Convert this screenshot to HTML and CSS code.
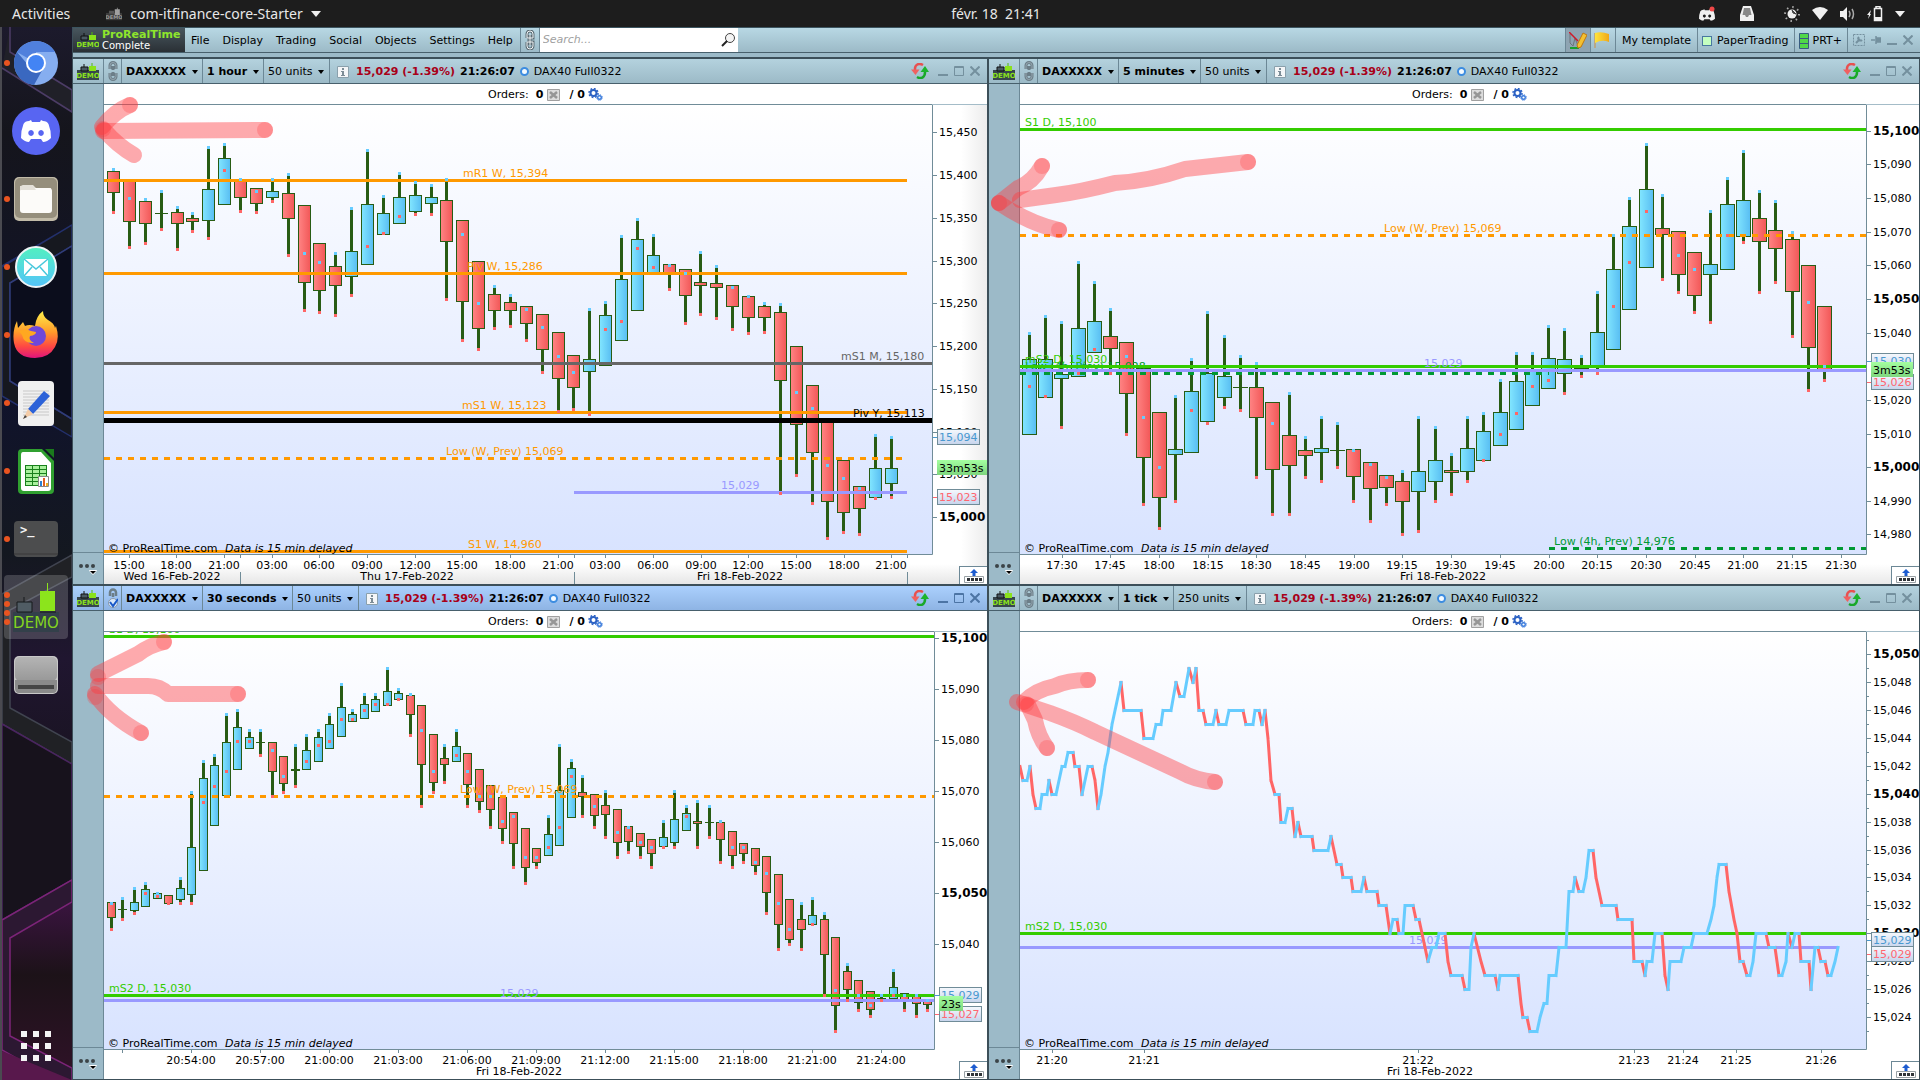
FILE: index.html
```html
<!DOCTYPE html>
<html lang="en">
<head>
<meta charset="utf-8">
<title>ProRealTime Complete</title>
<link rel="stylesheet" href="styles.css">
</head>
<body>
<svg class="defs" aria-hidden="true">
  <defs>
    <linearGradient id="gUp"><stop offset="0" stop-color="#82e6ff"/><stop offset="1" stop-color="#58bdf2"/></linearGradient>
    <linearGradient id="gDown"><stop offset="0" stop-color="#ff8484"/><stop offset="1" stop-color="#f25757"/></linearGradient>
    <linearGradient id="gPlot" x2="0" y2="1"><stop offset="0" stop-color="#ffffff"/><stop offset="1" stop-color="#d8e3ff"/></linearGradient>
    <linearGradient id="gTag" x2="0" y2="1"><stop offset="0" stop-color="#f6f9fd"/><stop offset="1" stop-color="#c6d4ec"/></linearGradient>
    <linearGradient id="gTime" x2="0" y2="1"><stop offset="0" stop-color="#a4ffa0"/><stop offset="1" stop-color="#7ed67e"/></linearGradient>
    <linearGradient id="gMail" x2="0" y2="1"><stop offset="0" stop-color="#52f0c0"/><stop offset="1" stop-color="#54c4fa"/></linearGradient>
    <linearGradient id="gFox" x2="0" y2="1"><stop offset="0" stop-color="#fff04a"/><stop offset=".45" stop-color="#ff9a2a"/><stop offset=".75" stop-color="#ff4a42"/><stop offset="1" stop-color="#e0147c"/></linearGradient>
    <linearGradient id="gDisk" x2="0" y2="1"><stop offset="0" stop-color="#b4b4b4"/><stop offset="1" stop-color="#989898"/></linearGradient>
    <linearGradient id="gFlag"><stop offset="0" stop-color="#ffe43a"/><stop offset="1" stop-color="#f0a818"/></linearGradient>
  </defs>
  <symbol id="demo" viewBox="0 0 22 17">
    <path d="M0 7h22v10H0z" fill="#37464c"/>
    <path d="M4 4h7v4H4z" fill="#4a5a62" stroke="#111"/><path d="M7 1v3" stroke="#111"/>
    <path d="M12 3h7v5h-7z" fill="#8ae21c"/><path d="M15 0v3" stroke="#55b810"/>
    <text x="11" y="15" text-anchor="middle" class="demo-word">DEMO</text>
  </symbol>
  <symbol id="chain" viewBox="0 0 10 20">
    <path d="M2 8V4.500a3 3 0 0 1 6 0V8M5 5v4M2 12v3.500a3 3 0 0 0 6 0V12M5 11v4" fill="none" stroke="#6c7e88" stroke-width="3"/>
    <path d="M2 8V4.500a3 3 0 0 1 6 0V8M2 12v3.500a3 3 0 0 0 6 0V12" fill="none" stroke="#94a6b0"/>
  </symbol>
  <symbol id="linked" viewBox="0 0 10 20">
    <path d="M2 8V4a3 3 0 0 1 6 0v4H2M2 12v4a3 3 0 0 0 6 0v-4H2M5 5v10" fill="none" stroke="#5c6c74" stroke-width="3"/>
    <path d="M2 8V4a3 3 0 0 1 6 0v4H2M2 12v4a3 3 0 0 0 6 0v-4H2M5 5v10" fill="none" stroke="#f0f4f6"/>
  </symbol>
  <symbol id="chainCheck" viewBox="0 0 10 20">
    <path d="M2 8V4.500a3 3 0 0 1 6 0V8M5 5v4" fill="none" stroke="#6c7e88" stroke-width="2.500"/>
    <circle cx="5" cy="15" r="4.500" fill="#d8e8fa" stroke="#8898a8"/>
    <path d="M2 14l3 4 5-7" fill="none" stroke="#1858c8" stroke-width="2"/>
  </symbol>
  <symbol id="info" viewBox="0 0 12 12">
    <path d="M.5.5h11v11H.5z" fill="#f4f6f8" stroke="#8aa0ac"/>
    <path d="M5 2h2v2H5zM4 5h3v4h1v1H4V9h1V6H4z" fill="#7c8c96"/>
  </symbol>
  <symbol id="refresh" viewBox="0 0 18 16">
    <path d="M12 2C8-.5 3.500 1.500 4 7" fill="none" stroke="#e85050" stroke-width="2.500"/><path d="M0 6.500h8.500L4.500 12z" fill="#f06060"/>
    <path d="M6 14c4 2.500 8.500.5 8-6" fill="none" stroke="#18a828" stroke-width="2.500"/><path d="M9.500 9H18l-4-6z" fill="#1cb42c"/>
  </symbol>
  <symbol id="min" viewBox="0 0 10 10"><path d="M0 9h10" stroke="currentColor" stroke-width="2"/></symbol>
  <symbol id="max" viewBox="0 0 10 10"><path d="M.5.5h9v9h-9zM0 1.500h10" fill="none" stroke="currentColor"/></symbol>
  <symbol id="close" viewBox="0 0 10 10"><path d="M.5.5l9 9m0-9l-9 9" stroke="currentColor" stroke-width="2"/></symbol>
  <symbol id="cancel" viewBox="0 0 13 12">
    <path d="M.5.5h12v11H.5z" fill="#dcdcdc" stroke="#a0a0a0"/><path d="M3 3l7 6m0-6L3 9" stroke="#969696" stroke-width="2.500"/>
  </symbol>
  <symbol id="gears" viewBox="0 0 15 13">
    <circle cx="5.500" cy="5" r="3" fill="none" stroke="#2c62c4" stroke-width="2"/>
    <circle cx="5.500" cy="5" r="4.500" fill="none" stroke="#2c62c4" stroke-width="1.500" stroke-dasharray="1.800 1.700"/>
    <circle cx="11.500" cy="9.500" r="1.800" fill="none" stroke="#3c7cdc" stroke-width="1.400"/>
    <circle cx="11.500" cy="9.500" r="2.800" fill="none" stroke="#3c7cdc" stroke-dasharray="1.200 1"/>
  </symbol>
  <symbol id="more" viewBox="0 0 18 12">
    <circle cx="2" cy="3" r="2" fill="#3c4448"/><circle cx="8" cy="3" r="2" fill="#3c4448"/><circle cx="14" cy="3" r="2" fill="#3c4448"/>
    <path d="M10 7h8l-1 2-3 3-3-3z" fill="#fff"/><path d="M11 8h6l-3 3z" fill="#000"/>
  </symbol>
  <symbol id="export" viewBox="0 0 20 14">
    <path d="M10 0l4 4h-2.500v3h-3V4H6z" fill="#1c5cd0"/>
    <path d="M.5 7.500h19v6H.5z" fill="#fff" stroke="#98a0a4"/><path d="M3 9h3v3H3zM7 9h3v3H7zM11 9h3v3h-3zM15 9h3v3h-3z" fill="#303438"/>
  </symbol>
  <symbol id="discord" viewBox="0 0 30 22">
    <path d="M10 0L8 1Q4 1 2.500 4 0 10 0 18q4 4 8 4l2-3h10l2 3q4 0 8-4 0-8-2.500-14Q26 1 22 1l-2-1-1 2h-8zM10 10a2.800 3 0 1 0 .1 0zm10 0a2.800 3 0 1 0 .1 0z" fill="currentColor" fill-rule="evenodd"/>
  </symbol>
</svg>

<header class="topbar">
  <div class="top-left">
    <button class="top-btn">Activities</button>
    <button class="top-btn app-name">
      <svg width="16" height="16" viewBox="0 0 22 17"><path d="M0 7h22v10H0z" fill="#3c3c3c"/><path d="M4 4h7v4H4z" fill="#555"/><path d="M12 2h7v8h-7zM15 0h1v3h-1z" fill="#a0a0a0"/><text x="11" y="16" text-anchor="middle" class="demo-word gray">DEMO</text></svg>
      com-itfinance-core-Starter
      <svg width="10" height="6"><path d="M0 0h10L5 6z" fill="#eee"/></svg>
    </button>
  </div>
  <time class="clock">févr. 18&nbsp; 21:41</time>
  <div class="tray">
    <svg class="tray-discord" width="17" height="16" viewBox="0 0 17 16"><use href="#discord" y="3" width="16" height="12"/><circle cx="13" cy="3" r="2.500" fill="#f04848"/></svg>
    <svg class="tray-box" width="14" height="15"><path d="M3 0h8l3 9v6H0V9z" fill="#f0f0f0"/><path d="M4 2h6l1.500 7H9l-1 2H6L5 9H2.500z" fill="#888"/></svg>
    <svg width="16" height="16"><circle cx="8" cy="8" r="7" fill="none" stroke="#aaa" stroke-width="2" stroke-dasharray="1.500 4"/><circle cx="8" cy="8" r="4.500" fill="#f0f0f0"/><path d="M8 4a4 4 0 0 0 4 4l-4-4" fill="#555" stroke="#444"/></svg>
    <svg width="16" height="13"><path d="M0 3q8-6 16 0L8 13z" fill="#f0f0f0"/></svg>
    <svg width="15" height="14"><path d="M0 4h3l4-4v14l-4-4H0z" fill="#f0f0f0"/><path d="M9 4q2 3 0 6M12 2q3 5 0 10" fill="none" stroke="#aaa" stroke-width="1.500"/></svg>
    <svg width="16" height="16"><path d="M4 4L0 9h2l-1 4 3-5H3z" fill="#f0f0f0"/><path d="M7.500 2.500h7v12h-7zM9 .5h4v2H9z" fill="none" stroke="#f0f0f0" stroke-width="1.500"/><path d="M8 11h6v3H8z" fill="#f0f0f0"/></svg>
    <svg width="10" height="6"><path d="M0 0h10L5 6z" fill="#f0f0f0"/></svg>
  </div>
</header>

<div class="screen">
  <nav class="dock" aria-label="Dock">
    <svg class="wall" viewBox="0 0 72 1053" preserveAspectRatio="none" aria-hidden="true">
      <defs>
        <linearGradient id="gWall" x2="0" y2="1"><stop offset="0" stop-color="#1c1a2c"/><stop offset=".1" stop-color="#15151c"/><stop offset=".35" stop-color="#10132c"/><stop offset=".5" stop-color="#141820"/><stop offset=".6" stop-color="#201630"/><stop offset=".75" stop-color="#16121a"/><stop offset=".83" stop-color="#3a1440"/><stop offset=".9" stop-color="#1c1218"/><stop offset="1" stop-color="#301228"/></linearGradient>
      </defs>
      <path d="M0 0h72v1053H0z" fill="url(#gWall)"/>
      <g stroke-width="1.500">
        <path d="M10 0v25l62 38v22L2 41" fill="#202028" stroke="#4c3c66"/>
        <path d="M72 198L2 240M72 219L10 256v98l62 38v18L2 369v-130l70-41z" fill="#16181f" stroke="#23306c"/>
        <path d="M72 219L10 256v98l62 38z" fill="#0b0d1c" stroke="#303c78"/>
        <path d="M72 528L2 567v130l70 40v-22L10 681v-98l62-33z" fill="#202125" stroke="#404450"/>
        <path d="M2 697l70 40v116L2 893z" fill="#17121c" stroke="#4a2460"/>
        <path d="M72 853L2 893v130l70 40v-22L10 1009v-98l62-36z" fill="#2c1832" stroke="#7c2478"/>
        <path d="M2 1024l70 29H2z" fill="#58184c"/>
      </g>
      <path d="M0 0h2v1053H0z" fill="#4a4a50"/>
    </svg>
    <a class="dock-item run" href="#" aria-label="Chromium"><svg width="44" height="46" viewBox="0 0 44 44"><circle cx="22" cy="22" r="22" fill="#86aef0"/><path d="M22 22L3 11A22 22 0 0 1 41 11H22z" fill="#5080dc"/><path d="M3 11a22 22 0 0 0 17 33l10-18-15-1z" fill="#3a68c0"/><circle cx="22" cy="22" r="10" fill="#fff"/><circle cx="22" cy="22" r="8" fill="#4384f4"/></svg></a>
    <a class="dock-item" href="#" aria-label="Discord"><svg width="48" height="48"><circle cx="24" cy="24" r="24" fill="#5865f2"/><use href="#discord" x="9" y="13" width="30" height="22" color="#fff"/></svg></a>
    <a class="dock-item run" href="#" aria-label="Files"><svg width="44" height="44"><rect width="44" height="44" rx="5" fill="#c2bba8"/><rect x="1" y="1" width="42" height="40" rx="5" fill="#958e7c"/><path d="M7 10q0-2 2-2h10l3 3h15v8H7z" fill="#e4e0d8"/><rect x="6" y="11" width="32" height="25" rx="3" fill="#fcfbf9"/><path d="M6 9h13l3 4H6z" fill="#e4e0d8"/></svg></a>
    <a class="dock-item run" href="#" aria-label="Mail"><svg width="42" height="42"><circle cx="21" cy="21" r="20" fill="url(#gMail)" stroke="#eef4f6" stroke-width="2"/><path d="M9 13h24v17H9z" fill="#fff"/><path d="M9 13l12 10 12-10M9 30l8-9m8 0l8 9" fill="none" stroke="#48c8dc" stroke-width="1.500"/></svg></a>
    <a class="dock-item run" href="#" aria-label="Firefox"><svg width="46" height="48" viewBox="0 0 46 48"><path d="M4 10l1 7 5-6 2 4q4-2 10 0 1-10 8-15 0 6 5 9 6 3 7 8l1-2q4 13-1 21-6 11-20 11Q4 47 1 32-1 20 4 10z" fill="url(#gFox)"/><circle cx="23" cy="25" r="10" fill="#7048d8"/><path d="M6 20q7-3 12 0l5 1q0 3-6 4-2 4 4 7-10 1-12-8z" fill="#ffa820"/></svg></a>
    <a class="dock-item run" href="#" aria-label="Text editor"><svg width="36" height="45"><rect width="36" height="45" rx="4" fill="#f0f0f0"/><path d="M5 10h26M5 13h26M5 16h26M5 19h26M5 22h26M5 25h26M5 28h26M5 31h26M5 34h26" stroke="#c8c8c8"/><path d="M26 10l6 5-17 18-5-5z" fill="#2c62d8"/><path d="M10 28l5 5-10 5z" fill="#f4cca8"/><path d="M7 34l2 2-4 2z" fill="#444"/></svg></a>
    <a class="dock-item run" href="#" aria-label="Calc"><svg width="36" height="45"><path d="M4 0h20l12 12v29q0 4-4 4H4q-4 0-4-4V4q0-4 4-4z" fill="#30a030"/><path d="M5 3h18l10 11v25q0 3-3 3H6q-3 0-3-3V6q0-3 2-3z" fill="#fff"/><path d="M27 0h9v9z" fill="#1a7a1c"/><path d="M7 16h22v21H7z" fill="#18801c"/><path d="M8 17h6v3H8zm7 0h6v3h-6zm7 0h6v3h-6zM8 21h6v3H8zm7 0h6v3h-6zm7 0h6v3h-6zM8 25h6v3H8zm7 0h6v3h-6zm7 0h6v3h-6zM8 29h6v3H8zm7 0h6v3h-6zM8 33h6v3H8zm7 0h6v3h-6z" fill="#a8f09c"/><path d="M20.500 27.500h10v10h-10z" fill="#fff" stroke="#888"/><path d="M22 32h2v5h-2z" fill="#2c80d0"/><path d="M25 29h2v8h-2z" fill="#e06020"/><path d="M28 34h2v3h-2z" fill="#f0b020"/></svg></a>
    <a class="dock-item run" href="#" aria-label="Terminal"><svg width="44" height="36"><rect width="44" height="36" rx="4" fill="#4c4d4e"/><path d="M0 33h44" stroke="#383838"/><text x="6" y="13" class="term">&gt;_</text></svg></a>
    <a class="dock-item run run-many" href="#" aria-label="ProRealTime"><svg width="46" height="50"><path d="M0 30h46v20H0z" fill="#33404a"/><path d="M4 20h15v10H4z" fill="#505c64" stroke="#14181a"/><path d="M11 15v5M27 30h16" stroke="#14181a"/><path d="M27 9h15v20H27zM34 1h1v8h-1z" fill="#8ce41c"/><text x="23" y="46" text-anchor="middle" class="demo-big">DEMO</text></svg></a>
    <a class="dock-item" href="#" aria-label="Disk"><svg width="44" height="38"><rect width="44" height="38" rx="5" fill="#c8c8c8"/><rect x="1" y="1" width="42" height="24" rx="5" fill="url(#gDisk)"/><path d="M1 24h42v8q0 5-4 5H5q-4 0-4-5z" fill="#8a8a8a"/><path d="M4 29h36v4H4z" fill="#454545"/></svg></a>
    <a class="dock-item apps" href="#" aria-label="Show applications"><svg width="30" height="30"><path d="M0 0h6v6H0zM12 0h6v6h-6zM24 0h6v6h-6zM0 12h6v6H0zM12 12h6v6h-6zM24 12h6v6h-6zM0 24h6v6H0zM12 24h6v6h-6zM24 24h6v6h-6z" fill="#f4f4f4"/></svg></a>
  </nav>

  <main class="app">
    <div class="menubar">
      <div class="brand">
        <svg width="22" height="17"><use href="#demo"/></svg>
        <div class="brand-text"><strong>ProRealTime</strong><span>Complete</span></div>
      </div>
      <div class="menus">
        <button>File</button><button>Display</button><button>Trading</button><button>Social</button><button>Objects</button><button>Settings</button><button>Help</button>
      </div>
      <button class="link-all" aria-label="Link windows"><svg width="10" height="20"><use href="#linked"/></svg></button>
      <label class="search"><input type="text" placeholder="Search..." aria-label="Search"><svg width="14" height="14"><circle cx="9" cy="5" r="4.500" fill="#f4f4f4" stroke="#444"/><path d="M6 8l-5 5" stroke="#222" stroke-width="2"/></svg></label>
      <div class="menu-right">
        <button class="cell tool on" aria-label="Drawing tools"><svg width="18" height="17"><path d="M1 16h9" stroke="#18a030" stroke-width="2"/><path d="M1 2v9l3 3 2-8 3 8" fill="none" stroke="#6c747c"/><path d="M0 0l9 9" stroke="#d01828" stroke-width="1.500"/><path d="M14 1l4 2-6 12-3 1-1-3z" fill="#f4c030" stroke="#c07810"/></svg></button>
        <button class="cell tool" aria-label="Alerts"><svg width="16" height="16"><path d="M1 1v15" stroke="#b8a888" stroke-width="2"/><path d="M1 1q6-2 14 1v8q-7-3-14 1z" fill="url(#gFlag)"/></svg></button>
        <button class="cell">My template</button>
        <button class="cell mode"><i class="sq"></i>PaperTrading</button>
        <button class="cell plus"><svg width="10" height="16"><path d="M.5.5h9v15h-9z" fill="#50d848" stroke="#385c80"/><path d="M0 5.500h10M0 10.500h10" stroke="#385c80"/></svg>PRT+</button>
        <div class="cell wins">
          <button aria-label="Configure"><svg width="12" height="12"><path d="M.5.5h11v11H.5z" fill="none" stroke="currentColor" stroke-dasharray="2 1"/><path d="M3 9l4-4M6 3a2 2 0 0 0 3 3" fill="none" stroke="currentColor" stroke-width="2"/></svg></button>
          <button aria-label="Pin"><svg width="10" height="8"><path d="M0 4h4M5 0v8M6 2h4v4H6z" fill="currentColor" stroke="currentColor" stroke-width="1.500"/></svg></button>
          <button aria-label="Minimize"><svg width="10" height="10"><use href="#min"/></svg></button>
          <button aria-label="Close"><svg width="10" height="10"><use href="#close"/></svg></button>
        </div>
      </div>
    </div>

    <div class="desk">
      <section class="panel">
        <div class="title">
          <span class="logo"><svg width="22" height="17"><use href="#demo"/></svg></span>
          <button class="lnk" aria-label="Link"><svg width="10" height="20"><use href="#chain"/></svg></button>
          <span class="pick bold"><select aria-label="Instrument"><option>DAXXXXX</option></select></span>
          <span class="pick bold"><select aria-label="Timeframe"><option>1 hour</option></select></span>
          <span class="pick"><select aria-label="Units"><option>50 units</option></select></span>
          <div class="quote"><svg width="12" height="12"><use href="#info"/></svg><b class="price">15,029 (-1.39%)</b><b>21:26:07</b><i class="ring"></i><span>DAX40 Full0322</span></div>
          <div class="wins"><button aria-label="Refresh"><svg width="18" height="16"><use href="#refresh"/></svg></button><button aria-label="Minimize"><svg width="10" height="10"><use href="#min"/></svg></button><button aria-label="Maximize"><svg width="10" height="10"><use href="#max"/></svg></button><button aria-label="Close"><svg width="10" height="10"><use href="#close"/></svg></button></div>
        </div>
        <div class="work">
          <aside class="side"><button aria-label="More tools"><svg width="18" height="12"><use href="#more"/></svg></button></aside>
          <div class="view">
            <div class="orders">Orders:<b>0</b><svg width="13" height="12"><use href="#cancel"/></svg><b class="slash">/ 0</b><svg width="15" height="13"><use href="#gears"/></svg></div>
            <div class="chart shade"><svg id="hour"></svg><button class="out" aria-label="Detach"><svg width="20" height="14"><use href="#export"/></svg></button></div>
          </div>
        </div>
      </section>

      <section class="panel">
        <div class="title">
          <span class="logo"><svg width="22" height="17"><use href="#demo"/></svg></span>
          <button class="lnk" aria-label="Link"><svg width="10" height="20"><use href="#chain"/></svg></button>
          <span class="pick bold"><select aria-label="Instrument"><option>DAXXXXX</option></select></span>
          <span class="pick bold"><select aria-label="Timeframe"><option>5 minutes</option></select></span>
          <span class="pick"><select aria-label="Units"><option>50 units</option></select></span>
          <div class="quote"><svg width="12" height="12"><use href="#info"/></svg><b class="price">15,029 (-1.39%)</b><b>21:26:07</b><i class="ring"></i><span>DAX40 Full0322</span></div>
          <div class="wins"><button aria-label="Refresh"><svg width="18" height="16"><use href="#refresh"/></svg></button><button aria-label="Minimize"><svg width="10" height="10"><use href="#min"/></svg></button><button aria-label="Maximize"><svg width="10" height="10"><use href="#max"/></svg></button><button aria-label="Close"><svg width="10" height="10"><use href="#close"/></svg></button></div>
        </div>
        <div class="work">
          <aside class="side"><button aria-label="More tools"><svg width="18" height="12"><use href="#more"/></svg></button></aside>
          <div class="view">
            <div class="orders">Orders:<b>0</b><svg width="13" height="12"><use href="#cancel"/></svg><b class="slash">/ 0</b><svg width="15" height="13"><use href="#gears"/></svg></div>
            <div class="chart shade low"><svg id="five"></svg><button class="out" aria-label="Detach"><svg width="20" height="14"><use href="#export"/></svg></button></div>
          </div>
        </div>
      </section>

      <section class="panel active">
        <div class="title">
          <span class="logo"><svg width="22" height="17"><use href="#demo"/></svg></span>
          <button class="lnk" aria-label="Link"><svg width="10" height="20"><use href="#chainCheck"/></svg></button>
          <span class="pick bold"><select aria-label="Instrument"><option>DAXXXXX</option></select></span>
          <span class="pick bold"><select aria-label="Timeframe"><option>30 seconds</option></select></span>
          <span class="pick"><select aria-label="Units"><option>50 units</option></select></span>
          <div class="quote"><svg width="12" height="12"><use href="#info"/></svg><b class="price">15,029 (-1.39%)</b><b>21:26:07</b><i class="ring"></i><span>DAX40 Full0322</span></div>
          <div class="wins"><button aria-label="Refresh"><svg width="18" height="16"><use href="#refresh"/></svg></button><button aria-label="Minimize"><svg width="10" height="10"><use href="#min"/></svg></button><button aria-label="Maximize"><svg width="10" height="10"><use href="#max"/></svg></button><button aria-label="Close"><svg width="10" height="10"><use href="#close"/></svg></button></div>
        </div>
        <div class="work">
          <aside class="side"><button aria-label="More tools"><svg width="18" height="12"><use href="#more"/></svg></button></aside>
          <div class="view">
            <div class="orders">Orders:<b>0</b><svg width="13" height="12"><use href="#cancel"/></svg><b class="slash">/ 0</b><svg width="15" height="13"><use href="#gears"/></svg></div>
            <div class="chart"><svg id="half"></svg><button class="out" aria-label="Detach"><svg width="20" height="14"><use href="#export"/></svg></button></div>
          </div>
        </div>
      </section>

      <section class="panel">
        <div class="title">
          <span class="logo"><svg width="22" height="17"><use href="#demo"/></svg></span>
          <button class="lnk" aria-label="Link"><svg width="10" height="20"><use href="#chain"/></svg></button>
          <span class="pick bold"><select aria-label="Instrument"><option>DAXXXXX</option></select></span>
          <span class="pick bold"><select aria-label="Timeframe"><option>1 tick</option></select></span>
          <span class="pick"><select aria-label="Units"><option>250 units</option></select></span>
          <div class="quote"><svg width="12" height="12"><use href="#info"/></svg><b class="price">15,029 (-1.39%)</b><b>21:26:07</b><i class="ring"></i><span>DAX40 Full0322</span></div>
          <div class="wins"><button aria-label="Refresh"><svg width="18" height="16"><use href="#refresh"/></svg></button><button aria-label="Minimize"><svg width="10" height="10"><use href="#min"/></svg></button><button aria-label="Maximize"><svg width="10" height="10"><use href="#max"/></svg></button><button aria-label="Close"><svg width="10" height="10"><use href="#close"/></svg></button></div>
        </div>
        <div class="work">
          <aside class="side"><button aria-label="More tools"><svg width="18" height="12"><use href="#more"/></svg></button></aside>
          <div class="view">
            <div class="orders">Orders:<b>0</b><svg width="13" height="12"><use href="#cancel"/></svg><b class="slash">/ 0</b><svg width="15" height="13"><use href="#gears"/></svg></div>
            <div class="chart"><svg id="tick"></svg><button class="out" aria-label="Detach"><svg width="20" height="14"><use href="#export"/></svg></button></div>
          </div>
        </div>
      </section>
    </div>
  </main>
</div>

<svg class="marks" viewBox="0 0 1920 1080" preserveAspectRatio="none" aria-hidden="true">
  <path d="M265 130L103 131"/><path d="M130 105Q115 111 102 127"/><path d="M134 155Q118 146 104 130"/>
  <path d="M1248 162L1185 169Q1150 181 1115 183 1080 192 1056 195L1020 200"/><path d="M1042 166Q1033 182 1018 188L999 203"/><path d="M1059 230Q1030 224 999 203"/>
  <path d="M238 694H168Q160 686 148 686H98"/><path d="M164 642Q150 645 138 654L98 674"/><path d="M95 694Q110 716 141 733"/>
  <path d="M1215 782Q1195 780 1181 772L1095 732Q1075 722 1050 713L1017 702"/><path d="M1088 680Q1068 680 1055 686 1035 690 1024 702"/><path d="M1047 748Q1038 736 1035 720L1028 705"/>
  <g class="ends"><circle cx="265" cy="130" r="8"/><circle cx="130" cy="105" r="8"/><circle cx="103" cy="129" r="8"/><circle cx="1248" cy="162" r="8"/><circle cx="1042" cy="166" r="8"/><circle cx="1059" cy="230" r="8"/><circle cx="999" cy="203" r="8"/><circle cx="238" cy="694" r="8"/><circle cx="164" cy="642" r="8"/><circle cx="141" cy="733" r="8"/><circle cx="98" cy="677" r="8"/><circle cx="95" cy="697" r="8"/><circle cx="1215" cy="782" r="8"/><circle cx="1088" cy="680" r="8"/><circle cx="1047" cy="748" r="8"/><circle cx="1026" cy="704" r="8"/></g>
</svg>
<script src="charts.js"></script>
</body>
</html>
```
FILE: styles.css
```css
* { box-sizing: border-box; }
html, body { height: 100%; }
body {
  margin: 0;
  display: flex;
  flex-direction: column;
  background: #9cbac8;
  color: #000;
  font: 11px/14px "DejaVu Sans", sans-serif;
  overflow: hidden;
}
button, select, input { font: inherit; color: inherit; border: 0; background: none; padding: 0; margin: 0; border-radius: 0; }
svg { display: block; flex: none; }
.defs { position: absolute; width: 0; height: 0; }

/* desktop bar */
.topbar {
  flex: none;
  height: 27px;
  display: grid;
  grid-template-columns: 950fr auto 878fr;
  align-items: center;
  background: #1d1d1d;
  color: #e8e8e8;
  font: 14px/20px "Noto Sans", sans-serif;
}
.top-left { display: flex; gap: 36px; padding-left: 12px; }
.app-name { display: flex; align-items: center; gap: 8px; }
.clock { white-space: nowrap; }
.tray { display: flex; align-items: center; justify-content: flex-end; gap: 12px; padding-right: 15px; color: #f0f0f0; }
.tray-discord { margin-right: 12px; }
.tray-box { margin-right: 18px; }
.demo-word { font: bold 7px "DejaVu Sans", sans-serif; fill: #8ae21c; }
.demo-word.gray { fill: #999; }
.demo-big { font: 15px "DejaVu Sans", sans-serif; fill: #84d420; }
.term { font: bold 12px "DejaVu Sans Mono", monospace; fill: #f4f4f4; }

.screen { flex: 1; min-height: 0; display: flex; }

/* dock */
.dock {
  position: relative;
  flex: none;
  width: 72px;
  display: flex;
  flex-direction: column;
  gap: 4px;
  padding: 4px 4px 2px;
}
.wall { position: absolute; inset: 0; width: 100%; height: 100%; }
.dock-item { position: relative; flex: none; height: 64px; display: flex; align-items: center; justify-content: center; border-radius: 4px; }
.apps { margin-top: auto; }
.run::before {
  content: "";
  position: absolute;
  left: 0;
  top: 29px;
  width: 6px;
  height: 6px;
  border-radius: 3px;
  background: #e95420;
}
.run-many { background: rgba(255, 255, 255, .18); }
.run-many::before { top: 17px; box-shadow: 0 9px #e95420, 0 18px #e95420, 0 27px #e95420; }

/* application */
.app { flex: 1; min-width: 0; display: flex; flex-direction: column; border-left: 1px solid #3c4f59; border-top: 1px solid #3c5560; }
.menubar {
  flex: none;
  height: 25px;
  display: flex;
  border-bottom: 1px solid #48606c;
  background: linear-gradient(#b8d8e4, #9cbac7);
}
.brand { flex: none; width: 112px; display: flex; align-items: center; gap: 3px; padding-left: 4px; background: linear-gradient(#48565e, #2a3035); }
.brand-text { display: flex; flex-direction: column; color: #fff; font-size: 10px; line-height: 11px; }
.brand-text strong { font-size: 11px; color: #8ee62c; }
.menus { display: flex; gap: 1px; padding-right: 1px; }
.menus button { padding: 1px 6px 0; }
.link-all { width: 20px; padding: 0 4px; border: solid #6c8896; border-width: 0 1px; }
.search { display: flex; align-items: center; width: 198px; padding: 0 3px; background: #fff; }
.search input { flex: 1; min-width: 0; outline: 0; }
.search input::placeholder { color: #a0a0a0; font-style: italic; }
.menu-right { margin-left: auto; display: flex; padding-right: 1px; }
.cell { display: flex; align-items: center; padding: 1px 6px 0; border-left: 1px solid #6c8896; white-space: nowrap; }
.tool { width: 25px; padding: 0 3px; }
.on { background: #8ea4b2; }
.mode { gap: 5px; padding: 1px 5px 0 4px; }
.plus { gap: 4px; padding: 1px 5px 0 4px; }
.sq { width: 10px; height: 10px; background: #c4ffc0; border: 1px solid #4878a0; }
.wins { display: flex; align-items: center; gap: 6px; color: #74909e; }
.menubar .wins { padding: 0 6px 0 5px; }

.desk {
  flex: 1;
  min-height: 0;
  margin-top: 4px;
  display: grid;
  grid-template-columns: minmax(0, 914fr) minmax(0, 930fr);
  grid-template-rows: minmax(0, 525fr) minmax(0, 493fr);
  gap: 2px;
  padding: 2px 1px 1px 0;
  background: #3c4f59;
}
.panel { display: flex; flex-direction: column; background: #9cbac8; }
.title {
  flex: none;
  height: 25px;
  display: flex;
  border-bottom: 1px solid #48606c;
  background: linear-gradient(#b4d2de, #9cbac7);
}
.active .title { background: linear-gradient(#abd0fd, #8eb4e4); }
.logo { flex: none; width: 31px; display: flex; align-items: center; justify-content: center; border-right: 1px solid #6c8896; }
.lnk { flex: none; width: 18px; padding: 0 4px; border-right: 1px solid #6c8896; }
.pick { flex: none; display: flex; align-items: center; padding: 1px 5px 0 4px; border-right: 1px solid #6c8896; gap: 5px; }
.pick select { appearance: none; outline: 0; }
.pick::after { content: ""; border: solid transparent; border-width: 4px 3px 0; border-top-color: #000; }
.bold { padding-right: 4px; }
.bold select { font-weight: bold; }
.quote { display: flex; align-items: center; padding: 1px 0 0 7px; white-space: nowrap; }
.quote b { margin-right: 5px; }
.quote .price { margin-left: 7px; color: #a80018; }
.ring { width: 9px; height: 9px; border: 2px solid #3c8ce0; border-radius: 5px; background: #f4faff; margin-right: 5px; }
.title .wins { margin-left: auto; padding-right: 7px; }
.title .wins button:first-child { margin-right: 3px; }
.active .wins { color: #4c74a4; }

.work { flex: 1; min-height: 0; display: flex; }
.side { flex: none; width: 31px; display: flex; flex-direction: column; border-right: 1px solid #6c8896; background: #9cbac8; }
.side button { margin-top: auto; height: 32px; padding: 0 6px; border-top: 1px solid #6c8896; }
.view { flex: 1; min-width: 0; display: flex; flex-direction: column; background: #fff; }
.orders { flex: none; height: 20px; display: flex; align-items: center; justify-content: center; padding-top: 1px; }
.orders b { margin: 0 4px 0 7px; }
.orders .slash { margin: 0 3px 0 9px; white-space: pre; }
.chart { position: relative; flex: 1; min-height: 0; }
.shade { background: linear-gradient(90deg, transparent calc(100% - 26px), #ececec), linear-gradient(#fff calc(100% - 20px), #e6e6e6); }
.low { background: linear-gradient(#fff calc(100% - 20px), #e9e9e9); }
.chart > svg { width: 100%; height: 100%; }
.chart text { fill: #000; }
.chart .major { font-weight: bold; font-size: 12px; }
.chart .slant { font-style: italic; }
.out { position: absolute; right: 0; bottom: 0; padding: 2px 3px 1px 4px; background: #fff; border: solid #6c8896; border-width: 1px 0 0 1px; }

/* freehand arrows over the windows */
.marks { position: absolute; inset: 0; width: 100%; height: 100%; pointer-events: none; }
.marks path { fill: none; stroke: rgba(255, 60, 65, .43); stroke-width: 16; stroke-linecap: round; stroke-linejoin: round; }
.ends { fill: rgba(255, 50, 55, .25); }
```
FILE: charts.js
```js
// Each chart is described on its own canvas: box = [left, top, width, height],
// right / bottom = edges of the plot. Everything is scaled to the real element.
const ORANGE = '#ff9900', GREEN = '#33cc00', VIOLET = '#9999ff', PINE = '#009933', FRAME = '#708c98';

// candles: high marker, body top, body bottom, low marker, direction
const charts = {
  hour: {
    box: [104, 104, 883, 480], right: 932, bottom: 554, body: 13, first: 113, last: 891,
    candles: [
      [169,171,192,212,'d'],[198,181,221,247,'d'],[199,201,223,243,'d'],[191,213,213,229,'d'],[207,212,223,249,'d'],
      [213,218,221,231,'d'],[147,189,220,238,'u'],[144,158,204,170,'u'],[179,181,197,211,'d'],[191,188,203,212,'d'],
      [179,191,197,201,'u'],[174,193,218,255,'d'],[253,205,282,310,'d'],[262,243,290,312,'d'],[253,266,285,315,'d'],
      [208,251,276,295,'u'],[150,204,264,246,'u'],[196,213,234,233,'u'],[173,197,223,216,'u'],[182,195,211,214,'u'],
      [185,197,203,214,'u'],[179,200,241,299,'d'],[234,220,301,340,'d'],[303,261,328,349,'d'],[286,294,310,328,'d'],
      [295,302,310,326,'d'],[309,306,323,340,'d'],[327,314,349,372,'d'],[356,332,378,411,'d'],[372,355,387,409,'d'],
      [309,359,371,414,'u'],[302,315,365,329,'u'],[236,279,340,321,'u'],[219,239,310,248,'u'],[235,255,272,267,'u'],
      [265,264,272,289,'d'],[273,269,295,323,'d'],[252,282,285,314,'d'],[266,283,287,318,'d'],[287,285,306,329,'d'],
      [296,296,317,333,'d'],[303,306,317,332,'d'],[304,312,380,493,'d'],[392,346,424,475,'d'],[408,385,452,503,'d'],
      [465,421,501,538,'d'],[478,460,512,532,'d'],[488,486,508,534,'d'],[435,468,497,498,'u'],[437,468,483,497,'u']
    ],
    lines: [
      [180,104,907,ORANGE,3,'mR1 W, 15,394',463], [273,104,907,ORANGE,3,'Piv W, 15,286',467],
      [363,104,932,'#666666',3,'mS1 M, 15,180',841], [412,104,907,ORANGE,3,'mS1 W, 15,123',462],
      [420,104,932,'#000000',5,'Piv Y, 15,113',853], [458,104,907,ORANGE,-3,'Low (W, Prev) 15,069',446],
      [492,574,907,VIOLET,3,'15,029',721], [551,104,907,ORANGE,3,'S1 W, 14,960',468]
    ],
    prices: [[132,'15,450'],[175,'15,400'],[218,'15,350'],[261,'15,300'],[303,'15,250'],[346,'15,200'],[389,'15,150'],[432,'15,100'],[474,'15,050'],[517,'15,000',1]],
    tags: [[437,'15,094','hi'],[497,'15,023','lo'],[468,'33m53s','time']],
    times: [[129,'15:00'],[176,'18:00'],[224,'21:00'],[240,''],[272,'03:00'],[319,'06:00'],[367,'09:00'],[415,'12:00'],[462,'15:00'],[510,'18:00'],[558,'21:00'],[574,''],[605,'03:00'],[653,'06:00'],[701,'09:00'],[748,'12:00'],[796,'15:00'],[844,'18:00'],[891,'21:00'],[907,'']],
    days: [[172,'Wed 16-Feb-2022'],[407,'Thu 17-Feb-2022'],[740,'Fri 18-Feb-2022']], splits: [240,574,907]
  },
  five: {
    box: [1020, 104, 899, 480], right: 1866, bottom: 554, body: 15, first: 1029, last: 1824,
    candles: [
      [333,359,434,386,'u'],[316,359,397,396,'u'],[322,374,378,427,'u'],[262,328,376,373,'u'],[282,321,352,349,'u'],
      [309,336,348,373,'d'],[356,342,393,434,'d'],[417,368,457,504,'d'],[467,412,497,528,'d'],[396,449,454,501,'u'],
      [359,391,452,410,'u'],[312,373,421,423,'u'],[336,376,397,407,'u'],[356,387,387,410,'u'],[363,387,417,477,'d'],
      [423,402,469,514,'d'],[393,435,465,514,'d'],[437,450,455,477,'d'],[417,448,452,481,'u'],[423,450,450,467,'u'],
      [450,449,476,501,'d'],[464,462,488,521,'d'],[477,475,487,504,'d'],[471,481,501,534,'d'],[417,471,491,531,'u'],
      [427,460,481,501,'u'],[454,470,472,494,'d'],[417,448,471,481,'u'],[413,431,460,460,'u'],[380,412,445,434,'u'],
      [353,381,429,413,'u'],[353,371,405,386,'u'],[326,358,388,380,'u'],[329,359,373,393,'u'],[356,368,368,376,'d'],
      [292,332,366,373,'u'],[235,269,349,306,'u'],[198,226,309,262,'u'],[144,189,267,211,'u'],[195,228,234,279,'d'],
      [255,231,274,292,'d'],[269,252,295,312,'d'],[211,264,274,322,'u'],[178,204,269,235,'u'],[151,200,236,242,'u'],
      [191,218,241,292,'d'],[201,230,248,282,'d'],[232,239,291,336,'d'],[302,265,347,390,'d'],[366,306,369,380,'d']
    ],
    lines: [
      [129,1020,1866,GREEN,3,'S1 D, 15,100',1025], [235,1020,1866,ORANGE,-3,'Low (W, Prev) 15,069',1384],
      [373,1020,1549,PINE,-3,'Low (4h, Prev) 15,028',1025], [366,1020,1866,GREEN,3,'mS2 D, 15,030',1025],
      [370,1020,1866,VIOLET,3,'15,029',1424], [548,1549,1866,PINE,-3,'Low (4h, Prev) 14,976',1554]
    ],
    prices: [[131,'15,100',1],[164,'15,090'],[198,'15,080'],[232,'15,070'],[265,'15,060'],[299,'15,050',1],[333,'15,040'],[400,'15,020'],[434,'15,010'],[467,'15,000',1],[501,'14,990'],[534,'14,980']],
    tags: [[361,'15,030','hi'],[382,'15,026','lo'],[370,'3m53s','time']],
    times: [[1062,'17:30'],[1110,'17:45'],[1159,'18:00'],[1208,'18:15'],[1256,'18:30'],[1305,'18:45'],[1354,'19:00'],[1402,'19:15'],[1451,'19:30'],[1500,'19:45'],[1549,'20:00'],[1597,'20:15'],[1646,'20:30'],[1695,'20:45'],[1743,'21:00'],[1792,'21:15'],[1841,'21:30']],
    days: [[1443,'Fri 18-Feb-2022']], splits: []
  },
  half: {
    box: [104, 631, 883, 448], right: 934, bottom: 1049, body: 9, first: 111, last: 927,
    candles: [
      [903,902,917,929,'d'],[898,909,909,919,'d'],[888,902,910,913,'u'],[883,889,906,893,'u'],[893,893,898,896,'u'],
      [903,895,903,903,'d'],[878,888,899,903,'u'],[792,847,894,903,'u'],[761,778,870,802,'u'],[755,765,825,786,'u'],
      [714,742,795,771,'u'],[710,727,769,741,'u'],[730,737,748,741,'u'],[730,742,742,755,'u'],[750,742,771,796,'d'],
      [776,756,783,792,'d'],[745,769,770,786,'u'],[735,750,769,761,'u'],[730,737,761,745,'u'],[714,724,748,741,'u'],
      [684,707,736,719,'u'],[710,714,721,719,'u'],[694,704,718,710,'u'],[694,699,711,704,'u'],[668,691,705,704,'u'],
      [689,693,699,699,'u'],[694,695,714,735,'d'],[730,705,764,806,'d'],[771,734,782,792,'d'],[745,758,764,782,'d'],
      [730,746,761,755,'u'],[771,753,784,806,'d'],[796,769,801,811,'d'],[796,785,809,827,'d'],[821,797,828,842,'d'],
      [816,812,843,867,'d'],[857,828,867,883,'d'],[857,848,862,867,'d'],[816,834,855,847,'u'],[745,790,845,827,'u'],
      [760,768,817,776,'u'],[776,792,796,816,'d'],[806,794,815,827,'d'],[791,805,814,837,'d'],[832,809,842,857,'d'],
      [827,826,841,852,'d'],[842,833,846,857,'d'],[847,839,853,867,'d'],[821,837,846,847,'u'],[791,819,842,847,'u'],
      [806,813,830,816,'u'],[801,821,823,847,'d'],[806,822,822,837,'u'],[821,822,839,862,'d'],[847,831,855,867,'d'],
      [847,843,853,862,'d'],[862,848,865,873,'d'],[873,856,892,913,'d'],[903,874,924,949,'d'],[929,899,939,944,'d'],
      [903,919,929,949,'d'],[898,915,924,924,'u'],[913,919,954,995,'d'],[990,937,1005,1031,'d'],[964,971,989,1000,'d'],
      [995,980,1002,1010,'d'],[1005,991,1009,1016,'d'],[995,998,998,1000,'u'],[970,987,998,995,'u'],[995,993,999,1010,'d'],
      [995,996,1003,1016,'d'],[1000,1001,1004,1010,'d']
    ],
    lines: [
      [636,104,934,GREEN,3,'S1 D, 15,100',109], [796,104,934,ORANGE,-3,'Low (W, Prev) 15,069',460],
      [995,104,934,GREEN,3,'mS2 D, 15,030',109], [1000,104,934,VIOLET,3,'15,029',500]
    ],
    prices: [[638,'15,100',1],[689,'15,090'],[740,'15,080'],[791,'15,070'],[842,'15,060'],[893,'15,050',1],[944,'15,040']],
    tags: [[995,'15,029','hi'],[1014,'15,027','lo'],[1004,'23s','time']],
    times: [[122,''],[191,'20:54:00'],[260,'20:57:00'],[329,'21:00:00'],[398,'21:03:00'],[467,'21:06:00'],[536,'21:09:00'],[605,'21:12:00'],[674,'21:15:00'],[743,'21:18:00'],[812,'21:21:00'],[881,'21:24:00']],
    days: [[519,'Fri 18-Feb-2022']], splits: []
  },
  tick: {
    box: [1020, 631, 899, 448], right: 1866, bottom: 1049,
    path: [
      [1020,766],[1023,780],[1027,780],[1030,766],[1033,794],[1036,808],[1040,808],[1042,794],[1047,794],[1049,780],
      [1052,794],[1056,794],[1062,766],[1065,766],[1068,752],[1073,752],[1075,766],[1079,766],[1082,794],[1088,766],
      [1092,766],[1095,780],[1098,808],[1101,794],[1105,766],[1108,752],[1112,724],[1115,710],[1118,696],[1121,682],
      [1124,710],[1141,710],[1144,738],[1153,738],[1156,724],[1161,724],[1163,710],[1171,710],[1176,682],[1180,696],
      [1184,696],[1189,668],[1193,682],[1196,668],[1199,710],[1203,710],[1206,724],[1213,724],[1216,710],[1219,724],
      [1226,724],[1229,710],[1243,710],[1246,724],[1253,724],[1255,710],[1259,710],[1262,724],[1265,710],[1268,738],
      [1271,780],[1275,794],[1279,794],[1281,822],[1285,822],[1288,808],[1292,808],[1295,836],[1298,822],[1301,836],
      [1312,836],[1314,850],[1328,850],[1331,836],[1334,850],[1337,864],[1341,864],[1343,877],[1351,877],[1353,891],
      [1361,891],[1364,877],[1367,891],[1377,891],[1379,905],[1386,905],[1390,933],[1393,919],[1397,919],[1399,933],
      [1403,933],[1405,905],[1413,905],[1416,919],[1419,919],[1422,933],[1425,947],[1428,961],[1432,947],[1436,947],
      [1439,933],[1445,933],[1448,961],[1451,975],[1462,975],[1465,989],[1469,989],[1471,947],[1474,933],[1481,961],
      [1485,975],[1495,975],[1498,989],[1500,975],[1518,975],[1521,1003],[1523,1017],[1527,1017],[1530,1031],[1537,1031],
      [1540,1017],[1544,1003],[1547,1003],[1549,975],[1556,975],[1559,947],[1566,947],[1569,891],[1573,891],[1575,877],
      [1579,891],[1583,891],[1586,877],[1589,850],[1593,850],[1596,877],[1599,891],[1602,905],[1616,905],[1618,919],
      [1632,919],[1634,961],[1642,961],[1645,975],[1647,961],[1652,961],[1655,933],[1662,933],[1665,975],[1668,989],
      [1670,961],[1681,961],[1684,947],[1691,947],[1694,933],[1707,933],[1711,919],[1714,905],[1717,877],[1719,864],
      [1726,864],[1729,891],[1734,919],[1737,933],[1740,961],[1743,961],[1747,975],[1750,975],[1753,961],[1756,933],
      [1766,933],[1769,947],[1775,947],[1779,975],[1782,975],[1786,961],[1788,933],[1792,947],[1795,933],[1799,933],
      [1801,961],[1809,961],[1811,989],[1815,947],[1818,947],[1821,961],[1825,961],[1828,975],[1831,975],[1835,961],[1838,947]
    ],
    lines: [[933,1020,1866,GREEN,3,'mS2 D, 15,030',1025], [947,1020,1838,VIOLET,3,'15,029',1409]],
    prices: [[640,''],[654,'15,050',1],[668,''],[682,'15,048'],[696,''],[710,'15,046'],[724,''],[738,'15,044'],[752,''],[766,'15,042'],[780,''],[794,'15,040',1],[808,''],[822,'15,038'],[836,''],[850,'15,036'],[864,''],[877,'15,034'],[891,''],[905,'15,032'],[919,''],[933,'15,030',1],[961,'15,028'],[975,''],[989,'15,026'],[1003,''],[1017,'15,024'],[1031,'']],
    tags: [[940,'15,029','hi'],[954,'15,029','lo']],
    times: [[1052,'21:20'],[1144,'21:21'],[1418,'21:22'],[1634,'21:23'],[1683,'21:24'],[1736,'21:25'],[1821,'21:26']],
    days: [[1430,'Fri 18-Feb-2022']], splits: []
  }
};

function draw(id) {
  const c = charts[id], el = document.getElementById(id);
  const W = el.clientWidth, H = el.clientHeight;
  const [left, top, w0, h0] = c.box;
  // axes keep their size; only the plot area stretches
  const R = W - (left + w0 - c.right), B = H - (top + h0 - c.bottom);
  const X = v => Math.round((v - left) * R / (c.right - left));
  const Y = v => Math.round((v - top) * B / (c.bottom - top));
  const rect = (x, y, w, h, f, more = '') => `<rect x="${x}" y="${y}" width="${w}" height="${h}" fill="${f}" ${more}/>`;
  const text = (x, y, s, more = '') => `<text x="${x}" y="${y}" ${more}>${s}</text>`;

  let marks = '', dots = '';
  (c.candles || []).forEach(([hi, bt, bb, lo, dir], i) => {
    const x = X(c.first + i * (c.last - c.first) / (c.candles.length - 1));
    const h = Y(Math.min(hi, bt)), l = Y(Math.max(lo, bb));
    const half = (c.body - 1) / 2, t = Y(bt), b = Y(bb);
    marks += rect(x - 1, h, 3, Math.max(1, l - h), '#285c14');
    marks += b - t < 2
      ? rect(x - half, t, c.body, b - t + 1, '#285c14')
      : `<rect x="${x - half + .5}" y="${t + .5}" width="${c.body - 1}" height="${b - t}" fill="url(#${dir === 'u' ? 'gUp' : 'gDown'})" stroke="#285c14"/>`;
    dots += rect(x - 1, Y(hi) - 1, 3, 3, '#66ccff') + rect(x - 1, Y(lo) - 1, 3, 3, '#ff6666');
  });

  let lines = '';
  c.lines.forEach(([y, x1, x2, color, wd, label, lx]) => {
    const dash = wd < 0 ? 'stroke-dasharray="6 6"' : '';
    lines += `<path d="M${X(x1)} ${Y(y) + .5}H${X(x2)}" stroke="${color}" stroke-width="${Math.abs(wd)}" ${dash}/>`;
    lines += text(X(lx), Y(y) - 3, label, `style="fill:${color}"`);
  });

  let series = '';
  if (c.path) {
    const runs = { '#ff6666': '', '#66ccff': '' };
    c.path.slice(1).forEach(([x, y], i) => {
      const [px, py] = c.path[i];
      runs[y > py ? '#ff6666' : '#66ccff'] += `M${X(px)} ${Y(py) + .5}L${X(x)} ${Y(y) + .5}`;
    });
    for (const k in runs) series += `<path d="${runs[k]}" stroke="${k}" stroke-width="3" stroke-linecap="square" fill="none"/>`;
  }

  let axes = `<path d="M0 .5H${R}M${R + .5} 0V${B + .5}H0" fill="none" stroke="${FRAME}"/><path d="M${R} .5H${W}" stroke="#a4bcc8"/>`;
  c.prices.forEach(([y, s, major]) => {
    axes += rect(R + 1, Y(y), s ? 4 : 2, 1, FRAME) + text(R + 7, Y(y) + 4, s, major ? 'class="major"' : '');
  });
  c.times.forEach(([x, s]) => {
    axes += rect(X(x), B + 1, 1, 3, FRAME) + text(X(x), B + 15, s, 'text-anchor="middle"');
  });
  c.splits.forEach(x => { axes += rect(X(x), B + 18, 1, H - B - 18, FRAME); });
  c.days.forEach(([x, s]) => { axes += text(X(x), B + 26, s, 'text-anchor="middle"'); });
  c.tags.forEach(([y, s, kind]) => {
    const t = Y(y) - 8;
    if (kind === 'time') {
      const w = s.length > 5 ? 50 : s.length > 3 ? 42 : 24;
      axes += rect(R + 5, t, w, 15, 'url(#gTime)') + text(R + 7, t + 12, s);
    } else {
      const color = kind === 'hi' ? '#4898d0' : '#ff6670';
      axes += rect(R + 1, t + 8, 4, 1, color);
      axes += `<rect x="${R + 5.5}" y="${t + .5}" width="42" height="15" fill="url(#gTag)" stroke="${FRAME}"/>` + text(R + 7, t + 12, s, `style="fill:${color}"`);
    }
  });

  el.innerHTML =
    `<clipPath id="clip-${id}"><rect width="${R}" height="${B}"/></clipPath>` +
    rect(0, 0, R, B, 'url(#gPlot)') +
    `<g clip-path="url(#clip-${id})">${marks}${lines}${series}${dots}` +
    text(4, B - 2, '© ProRealTime.com') + text(121, B - 2, 'Data is 15 min delayed', 'class="slant"') + '</g>' + axes;
}

function drawAll() { Object.keys(charts).forEach(draw); }
drawAll();
window.addEventListener('resize', drawAll);
```
